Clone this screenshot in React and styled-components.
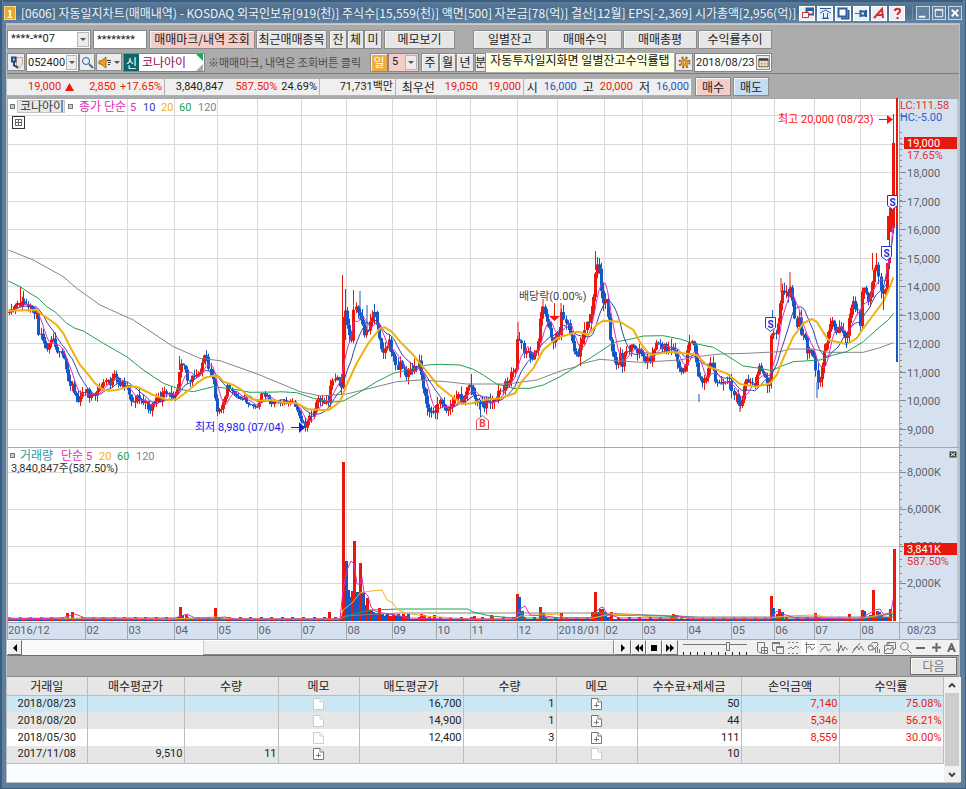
import React from "react";
import styled, { createGlobalStyle, css } from "styled-components";

const RED = "#e8190c";
const BLUE = "#1458c8";

const numeric = css`
  font-family: Roboto, "Noto Sans CJK KR", sans-serif;
  font-size: 11px;
`;

const GlobalStyle = createGlobalStyle`
  *, *::before, *::after { box-sizing: border-box; }
  body { margin: 0; background: #5c7d9c; }
  body, button, input, select, table {
    font-family: "Noto Sans CJK KR", sans-serif;
    font-size: 12px;
    line-height: 14px;
    color: #222;
  }
`;

/* ---------- window ---------- */

const Window = styled.main`
  width: 100%;
  padding: 0 6px 6px 5px;
  background: #5f7f9e;
  border-left: 2px solid #3d5c7e;
  border-right: 1px solid #3d5c7e;
  border-bottom: 1px solid #3d5c7e;
`;

const TitleBar = styled.header`
  display: flex;
  align-items: center;
  height: 24px;
  margin: 0 -4px;
  border-top: 2px solid #3d5c7e;
  background: linear-gradient(#587b9b, #4b6b89 45%, #6586a5);
`;

const AppBadge = styled.span`
  display: flex;
  align-items: center;
  justify-content: center;
  width: 12px;
  height: 14px;
  margin: 0 5px 0 1px;
  background: #e9a52c;
  border: 1px solid #f7d78d;
  color: #fff;
  font-weight: bold;
  font-size: 11px;
`;

const Title = styled.h1`
  flex: 1;
  min-width: 0;
  margin: 0;
  overflow: hidden;
  white-space: nowrap;
  font-size: 12px;
  line-height: 18px;
  font-weight: normal;
  color: #eef4fa;
`;

const TitleButtons = styled.div`
  display: flex;
  gap: 2px;
  padding-right: ${(p) => (p.$last ? "1px" : "7px")};
  ${(p) => p.$last && css`border-left: 1px solid #6d8cab; padding-left: 3px;`}
`;

const TitleButton = styled.button`
  display: flex;
  align-items: center;
  justify-content: center;
  width: ${(p) => (p.$frame ? 14 : 16)}px;
  height: ${(p) => (p.$frame ? 14 : 15)}px;
  padding: 0;
  border: 1px solid ${(p) => (p.$frame ? "#c9d8e6" : "#fff")};
  background: ${(p) => (p.$frame ? "#5f81a3" : "#e9eff7")};
  svg { display: block; flex: none; }
`;

const Client = styled.div`
  background: #ababab;
  border-top: 1px solid #c9c9c9;
  box-shadow: 0 0 0 1px #b9bfc6;
`;

/* ---------- toolbars ---------- */

const Bar = styled.div`
  display: flex;
  align-items: center;
  height: ${(p) => p.$height}px;
  padding-top: ${(p) => p.$top || 0}px;
  ${(p) => p.$rule && css`border-bottom: 1px solid #7d7d7d;`}
`;

const Gap = styled.span`
  flex: none;
  width: ${(p) => p.$width}px;
`;

const tones = {
  plain: "#e6e6e6",
  pink: "#f4cdc8",
  blue: "#c5dcf2",
  amber: "#efab3c",
};

const ToolButton = styled.button`
  flex: none;
  display: flex;
  align-items: center;
  justify-content: center;
  width: ${(p) => p.$width}px;
  height: 19px;
  padding: 0;
  overflow: hidden;
  white-space: nowrap;
  border: 1px solid #8b8b8b;
  box-shadow: inset 1px 1px 0 #f7f7f7;
  background: ${(p) => tones[p.$tone || "plain"]};
  color: ${(p) => (p.$tone === "amber" ? "#fff" : "#222")};
`;

const Field = styled.span`
  flex: none;
  display: flex;
  align-items: center;
  width: ${(p) => p.$width}px;
  height: 19px;
  padding-right: 1px;
  border: 1px solid #858585;
  background: ${(p) => (p.$tone ? tones[p.$tone] : "#fff")};
`;

const control = css`
  ${numeric}
  flex: 1;
  min-width: 0;
  width: 100%;
  height: 17px;
  padding: 0 0 0 ${(p) => (p.$tight ? 1 : 3)}px;
  border: 0;
  background: transparent;
  appearance: none;
  outline: none;
`;
const Select = styled.select`${control}`;
const Input = styled.input`${control}`;

const Drop = styled.span`
  flex: none;
  display: flex;
  align-items: center;
  justify-content: center;
  width: ${(p) => p.$width || 12}px;
  height: 15px;
  border: 1px solid #b5b5b5;
  background: #ececec;
`;

const StockTag = styled.span`
  align-self: stretch;
  width: 15px;
  background: #0c6866;
  color: #fff;
  text-align: center;
  line-height: 17px;
`;

const StockName = styled.span`
  flex: 1;
  padding-left: 3px;
  color: #8a0f55;
`;

const Hint = styled.span`
  flex: none;
  width: 160px;
  font-size: 11px;
  color: #4b4b4b;
  white-space: nowrap;
`;

const Balloon = styled.span`
  flex: none;
  width: 188px;
  height: 19px;
  background: #ffffdf;
  color: #111;
  white-space: nowrap;
  overflow: hidden;
  text-align: center;
`;

const Cell = styled.span`
  flex: none;
  display: flex;
  align-items: center;
  justify-content: flex-end;
  gap: ${(p) => p.$gap || 8}px;
  width: ${(p) => p.$width}px;
  height: 18px;
  padding: 0 2px;
  background: #efefef;
  border: solid #b3b3b3;
  border-width: 1px 1px 1px 0;
  white-space: nowrap;
`;

const Value = styled.span`
  ${(p) => !p.$label && numeric}
  color: ${(p) => (p.$tone === "up" ? RED : p.$tone === "low" ? "#2455c4" : "#222")};
`;

/* ---------- chart ---------- */

const ChartSvg = styled.svg`
  display: block;
  width: 100%;
  height: auto;
  background: #fff;
  font-family: Roboto, "Noto Sans CJK KR", sans-serif;
  font-size: 11px;
`;

const Korean = styled.text`
  font-family: "Noto Sans CJK KR", sans-serif;
  font-size: 12px;
`;

/* Each block lists points in thirds of a unit from its own corner. */
const block = (left, top, flat) => {
  const out = [];
  for (let i = 0; i < flat.length; i += 2) out.push([left + flat[i] / 3, top + flat[i + 1] / 3]);
  return out;
};

const joinBlocks = (a, b, c) => [...block(0, 240, a), ...block(280, 240, b), ...block(580, 220, c)];

const price = joinBlocks(
  [25,230,35,215,45,200,55,195,65,190,72,190,85,210,95,205,107,215,115,275,125,275,135,335,145,305,155,285,165,310,175,340,190,355,197,390,205,430,215,425,222,455,230,470,237,490,245,465,257,445,265,465,277,475,290,460,300,440,312,430,320,415,330,430,342,410,355,430,370,430,383,440,388,470,398,488,410,470,420,480,435,490,448,510,455,495,465,475,480,480,488,460,500,465,515,465,525,455,533,440,540,355,550,370,560,400,565,440,575,415,585,410,597,400,605,370,615,350,622,365,627,410,635,400,640,420,647,505,658,505,668,490,677,470,682,440,690,445,700,465,715,470,730,475,745,490,765,503,775,490,783,465,800,465,815,490,830,480,836,484],
  [0,485,40,490,50,515,60,535,78,562,88,530,100,525,110,480,125,490,145,480,152,425,165,405,180,440,184,440,188,235,197,210,207,290,215,305,222,180,230,220,240,240,250,280,262,270,270,245,283,215,292,260,300,310,310,340,325,305,335,330,347,385,360,365,375,405,390,395,405,390,415,360,425,410,432,470,445,515,460,520,470,495,485,485,500,510,515,495,530,470,545,475,560,450,573,435,585,480,600,495,608,500,620,480,635,490,650,475,665,445,680,430,690,410,700,400,707,390,712,290,722,295,730,330,745,345,765,350,775,300,783,205,790,200,800,240,815,310,822,310,828,270,838,280,845,215,860,245,875,300,887,340,895,345],
  [0,385,10,330,18,300,28,320,38,230,47,150,55,125,62,210,70,250,78,235,88,340,95,400,105,430,113,445,122,400,128,440,137,390,150,375,165,400,172,390,185,400,195,425,210,415,222,400,230,360,245,375,260,390,275,390,290,425,300,450,308,470,318,415,332,365,345,400,355,480,362,490,372,480,385,440,392,430,402,480,415,495,430,490,447,490,455,530,465,520,480,565,490,510,497,480,510,490,522,510,530,450,540,440,550,475,568,490,571,485,574,335,580,340,590,330,597,260,605,200,615,215,625,230,632,200,640,250,648,340,655,290,665,350,672,350,682,395,695,400,705,430,710,500,718,470,725,445,735,380,742,330,755,300,765,330,780,325,795,350,803,350,810,270,820,250,830,260,838,330,845,200,855,205,862,245,872,220,880,140,890,140,898,200,907,230,915,190,920,140,925,90,930,50,935,0]
);

const average20 = joinBlocks(
  [25,212,110,210,120,220,150,240,170,255,190,280,210,320,240,375,260,398,285,430,305,447,325,452,350,450,385,440,410,440,430,450,460,465,480,472,500,480,530,478,560,455,590,430,615,413,640,407,655,408,670,425,700,435,725,450,750,475,780,482,810,480,835,484],
  [0,487,50,490,85,508,140,511,150,508,180,485,200,435,230,370,265,310,300,265,315,262,335,275,360,305,400,345,420,370,445,400,475,437,510,465,545,492,575,490,610,480,660,475,705,460,725,425,760,385,790,330,830,295,890,275],
  [0,337,25,345,50,315,70,302,120,305,160,330,185,375,210,405,270,395,330,402,350,405,385,440,440,460,480,492,530,500,570,490,590,465,610,415,640,350,670,310,695,297,710,305,745,360,800,373,830,355,850,325,880,285,910,245,930,200,940,172]
);
const average60 = joinBlocks(
  [25,123,60,140,90,160,115,175,140,200,165,215,200,250,225,265,250,273,310,310,380,350,430,390,490,430,540,448,580,455,640,440,700,447,750,457,835,456],
  [0,455,50,458,100,475,150,487,190,483,230,462,290,425,340,400,390,388,440,375,480,373,540,375,580,388,610,405,650,432,700,445,750,445,790,435,840,410,880,385],
  [0,432,30,415,90,375,110,365,140,360,190,348,250,347,300,357,340,370,400,382,430,400,490,438,540,445,575,452,600,440,640,425,720,420,760,405,800,395,850,365,900,320,925,300,940,280]
);
const average120 = joinBlocks(
  [25,30,100,60,190,110,230,145,300,195,400,240,520,320,600,355,660,362,780,405,835,428],
  [0,430,60,455,120,468,200,462,270,445,350,425,420,420,500,425,560,432,680,432,770,420,850,390,890,380],
  [0,432,60,418,110,422,180,427,300,420,350,410,420,402,500,400,600,395,630,387,700,387,740,397,850,397,900,383,940,368]
);

const path = (pts) => "M" + pts.map(([x, y]) => `${x.toFixed(1)} ${y.toFixed(1)}`).join("L");

const valueAt = (pts, x) => {
  let i = 1;
  while (i < pts.length - 1 && pts[i][0] < x) i += 1;
  const [x0, y0] = pts[i - 1];
  const [x1, y1] = pts[i];
  const t = Math.max(0, Math.min(1, (x - x0) / (x1 - x0 || 1)));
  return y0 + (y1 - y0) * t;
};

let seed = 11;
const random = () => {
  seed = (seed * 16807) % 2147483647;
  return seed / 2147483647;
};

const candles = (() => {
  const out = [];
  let last = 313;
  for (let x = 9; x < 891; x += 2.1) {
    const calm = x > 225 && x < 300 ? 4 : x > 340 ? 9 : 7;
    const close = valueAt(price, x) + (random() - 0.5) * calm;
    const top = Math.min(last, close) - random() * calm * 0.9;
    const bottom = Math.max(last, close) + random() * calm * 0.9;
    out.push({ x, open: last, close, top, bottom });
    last = close;
  }
  return out;
})();

const tallWicks = [
  [20.5, 287, 306, 1], [23.5, 291, 306, 0], [342.5, 275, 356, 1], [345.5, 289, 340, 0],
  [360, 291, 320, 0], [353.5, 290, 305, 1], [367, 305, 330, 0], [374.5, 304, 320, 0],
  [471.5, 374, 395, 0], [518, 322, 345, 1], [543, 299, 312, 1], [561, 303, 318, 1],
  [580.5, 350, 366, 1], [595.5, 251, 270, 1], [597.5, 257, 275, 0], [772.5, 310, 325, 0],
  [790, 272, 290, 1], [781, 278, 292, 1], [817, 382, 398, 0], [872.5, 253, 270, 1],
  [876.5, 253, 270, 1], [883.5, 295, 310, 1], [846.5, 342, 348, 0], [480.5, 400, 418, 0],
  [699, 394, 402, 0], [740, 404, 412, 1], [205.5, 355, 365, 1], [179.5, 356, 370, 1],
];

const averageOf = (n) =>
  candles.map((c, i) => {
    const part = candles.slice(Math.max(0, i - n + 1), i + 1);
    return [c.x, part.reduce((s, p) => s + p.close, 0) / part.length];
  });

const months = [
  [7, "2016/12"], [85.5, "02"], [127.5, "03"], [174.5, "04"], [217.5, "05"], [257.5, "06"],
  [301.5, "07"], [346.5, "08"], [392.5, "09"], [436.5, "10"], [470.5, "11"], [517.5, "12"],
  [557.5, "2018/01"], [604.5, "02"], [642.5, "03"], [687.5, "04"], [731.5, "05"],
  [774.5, "06"], [814.5, "07"], [860.5, "08"],
];

const priceLines = [115.5, 144.5, 172.5, 201.5, 229.5, 258.5, 286.5, 315.5, 343.5, 372.5, 400.5, 429.5];
const volumeLines = [472.5, 509.5, 546.5, 583.5];

const volumeSpikes = [
  [67, 613, 1], [72, 612, 1], [180, 607, 1], [182, 615, 0], [186, 615, 1], [215, 608, 1], [329, 612, 1],
  [342.5, 462, 1], [345.5, 561, 0], [348, 590, 0], [350, 597, 0], [352, 591, 1], [357, 592, 0],
  [353.8, 541, 1], [359.8, 563, 1], [362.5, 592, 0], [364, 605, 0], [366.5, 598, 1], [355, 602, 0],
  [369, 610, 0], [371, 610, 1], [373, 612, 0], [376, 613, 0], [379, 608, 1], [382, 614, 0],
  [386, 615, 0], [393, 614, 1], [397, 615, 0], [403, 614, 1], [421, 614, 1], [424, 615, 1], [434, 615, 1],
  [474, 616, 1], [491, 615, 1], [516.5, 594, 1], [519, 597, 0], [521.5, 611, 0], [540, 607, 1], [542.5, 613, 0],
  [561, 613, 1], [592, 612, 1], [595, 592, 1], [598, 612, 0], [600, 609, 1], [602, 609, 1],
  [604.5, 612, 0], [611, 612, 1], [673, 614, 1], [676, 615, 0], [771, 596, 1], [773, 608, 0],
  [777, 614, 1], [779, 609, 1], [781.5, 612, 0], [815, 613, 1], [849, 614, 1], [861.5, 610, 1],
  [864, 611, 0], [872.5, 590, 1], [876.5, 611, 1], [879, 612, 0], [889.5, 609, 1], [893.5, 549, 1],
];

const Marker = ({ x, y, letter, tone, up }) => (
  <g>
    <path
      d={up ? `M${x - 6} ${y + 6}V${y - 3}L${x} ${y - 8}L${x + 6} ${y - 3}V${y + 6}Z` : `M${x - 5} ${y - 7}H${x + 5}V${y + 3}L${x} ${y + 7}L${x - 5} ${y + 3}Z`}
      fill="#fff" stroke={tone}
    />
    <text x={x} y={y + 3} fill={tone} fontSize="10" fontWeight="bold" textAnchor="middle">{letter}</text>
  </g>
);

const Legend = ({ y, items }) =>
  items.map(([x, text, fill]) =>
    /\d/.test(text) ? <text key={x} x={x} y={y} fill={fill}>{text}</text> : <Korean key={x} x={x} y={y} fill={fill}>{text}</Korean>
  );

const SmallSquare = ({ x, y }) => <rect x={x} y={y} width="4" height="4" fill="#ccc" stroke="#777" />;

function Chart() {
  const ticks = [];
  for (let y = 132; y < 446; y += 5.7) ticks.push(y);
  for (let y = 455; y < 620; y += 7.4) ticks.push(y);
  return (
    <ChartSvg viewBox="7 98 952 542" role="img" aria-label="코나아이 일봉 차트">
      <rect x="900" y="98" width="59" height="542" fill="#d6e1ef" />
      <rect x="7" y="622" width="952" height="18" fill="#d6e1ef" />
      <g stroke="#d9d9d9">
        {months.slice(1).map(([x]) => <line key={x} x1={x} x2={x} y1="98" y2="622" />)}
        {[...priceLines, ...volumeLines].map((y) => <line key={y} x1="7" x2="899" y1={y} y2={y} />)}
      </g>
      <path d="M7 98.5H959M7 447.5H959M7 622.5H959M7 639.5H959M899.5 98V640M7.5 98V640M958 98V640" stroke="#a5a8ad" fill="none" />
      {months.slice(1).map(([x]) => <line key={x} x1={x} x2={x} y1="622" y2="640" stroke="#a0a6ae" />)}
      <g stroke="#888">
        {ticks.map((y) => <line key={y} x1="900" x2="902" y1={Math.round(y) + 0.5} y2={Math.round(y) + 0.5} />)}
        {[...priceLines, ...volumeLines].map((y) => <line key={y} x1="900" x2="906" y1={y} y2={y} />)}
      </g>

      {candles.map((c) => {
        const tone = c.close < c.open ? RED : BLUE;
        return (
          <g key={c.x} fill={tone}>
            <rect x={Math.round(c.x)} y={c.top} width="1" height={c.bottom - c.top} />
            <rect x={Math.round(c.x) - 1} y={Math.min(c.open, c.close)} width="3" height={Math.max(1, Math.abs(c.close - c.open))} />
          </g>
        );
      })}
      <g fill="none">
        <path d={path(average120)} stroke="#858585" />
        <path d={path(average60)} stroke="#22a04c" />
        <path d={path(averageOf(12))} stroke="#3242b0" />
        <path d={path(averageOf(6))} stroke="#e12dbb" />
        <path d={path(average20)} stroke="#f0b010" strokeWidth="2" />
      </g>
      {tallWicks.map(([x, a, b, up]) => <line key={x} x1={x} x2={x} y1={a} y2={b} stroke={up ? RED : BLUE} />)}
      <rect x="342" y="317" width="3" height="38" fill={RED} />
      <path d="M888.5 216V240M890.5 208V232" stroke={RED} strokeWidth="3" />
      <path d="M893.5 114V234" stroke={RED} />
      <rect x="892" y="143" width="3" height="85" fill={RED} />
      <path d="M884 285L890 258L893 235" stroke="#3242b0" fill="none" />
      <path d="M886 275L891 250L893 225" stroke="#e12dbb" fill="none" />
      <rect x="896" y="98" width="2" height="128" fill={RED} />
      <rect x="896" y="226" width="2" height="136" fill={BLUE} />

      <g>
        {candles.map((c, i) => {
          const h = 2 + ((i * 7) % 5 === 0 ? 2 : 0) + (c.x > 340 && c.x < 410 ? 3 : 0) + (c.x > 860 ? 2 : 0);
          return <rect key={c.x} x={Math.round(c.x) - 1} y={621 - h} width="3" height={h} fill={(i * 5) % 7 < 3 ? RED : BLUE} />;
        })}
        {volumeSpikes.map(([x, y, up]) => <rect key={x} x={Math.round(x) - 1} y={y} width="3" height={621 - y} fill={up ? RED : BLUE} />)}
      </g>
      <g fill="none">
        <path d="M8 619H340L345 616L360 615L400 613H520L600 613L700 617H770L860 617H893" stroke="#858585" />
        <path d="M8 619H340L353 614L370 610L400 609H468L473 612L490 616L515 618H590L610 615L663 616L700 618H860L893 614" stroke="#22a04c" />
        <path d="M8 618H100L170 619L215 617L235 619H340L343 610L352 603L360 593L371 591L382 590L387 600L393 603L397 609L405 613L425 616L470 619H515L520 616L557 614L565 618H593L610 614L635 615L660 618H770L785 616L815 615L830 618H865L893 612" stroke="#efb020" />
        <path d="M8 619L62 618L75 614L85 618H175L187 614L195 618H213L225 617L235 619H340L343 590L347 570L351 561L354 564L357 584L360 584L362 578L364 592L368 596L371 607L375 611L383 613L395 615L410 618L450 619H515L520 609L525 606L530 615L545 616L560 618H590L600 608L603 607L607 614L620 618H670L680 616L690 619H770L776 612L779 610L783 614L795 618L860 619L875 610L880 609L884 615L891 612L893 600" stroke="#e12dbb" />
      </g>

      <SmallSquare x={10.5} y={104.5} />
      <rect x="17.5" y="100.5" width="47" height="12" fill="#e9e9e9" stroke="#c4c4c4" />
      <SmallSquare x={68.5} y={104.5} />
      <Legend y={111} items={[[20, "코나아이", "#333"], [79, "종가", "#e12dbb"], [104, "단순", "#e12dbb"], [130, "5", "#e12dbb"], [143, "10", "#2d3fb0"], [161, "20", "#efb020"], [179, "60", "#22a04c"], [198, "120", "#858585"]]} />
      <g stroke="#333" fill="none">
        <rect x="12.5" y="116.5" width="12" height="12" fill="#fff" />
        <path d="M15 119.5H22M15 122.5H22M15 125.5H22M15.5 119V126M18.5 119V126M21.5 119V126" stroke="#666" />
      </g>
      <SmallSquare x={10.5} y={453.5} />
      <Legend y={460} items={[[20, "거래량", "#2f9999"], [61, "단순", "#e12dbb"], [86, "5", "#e12dbb"], [99, "20", "#efb020"], [117, "60", "#22a04c"], [136, "120", "#858585"]]} />
      <text x="11" y="472" fill="#333">3,840,847주(587.50%)</text>

      <text x="778" y="123" fill="#ff1010">최고 20,000 (08/23)</text>
      <path d="M879 119.5H892" stroke="#ff1010" />
      <path d="M887 115L893 119.5L887 124Z" fill="#ff1010" />
      <text x="195" y="431" fill="#1818f0">최저 8,980 (07/04)</text>
      <path d="M291 427.5H305" stroke="#1818f0" />
      <path d="M299 422L305 427.5L299 433Z" fill="#1818f0" />
      <text x="519" y="300" fill="#444">배당락(0.00%)</text>
      <path d="M554.5 303V318" stroke={RED} />
      <path d="M549 316H560L554.5 321Z" fill="#ff1010" />
      <Marker x={482.5} y={423.5} letter="B" tone="#f04040" up />
      <Marker x={770.5} y={324.5} letter="S" tone="#2d2de0" />
      <Marker x={886.5} y={253.5} letter="S" tone="#2d2de0" />
      <Marker x={892.5} y={202.5} letter="S" tone="#2d2de0" />

      <g fill="#5c616b">
        {["18,000", "17,000", "16,000", "15,000", "14,000", "13,000", "12,000", "11,000", "10,000", "9,000"].map((t, i) => (
          <text key={t} x="907" y={priceLines[i + 2] + 4}>{t}</text>
        ))}
        {["8,000K", "6,000K", "4,000K", "2,000K"].map((t, i) => (
          <text key={t} x="907" y={volumeLines[i] + 3}>{t}</text>
        ))}
        {months.map(([x, t]) => <text key={x} x={x + 1} y="634">{t}</text>)}
        <text x="907" y="634">08/23</text>
      </g>
      <text x="900" y="109" fill="#e03030">LC:111.58</text>
      <text x="900" y="121" fill="#2464c8">HC:-5.00</text>
      <rect x="904" y="137" width="53" height="12" fill={RED} />
      <text x="907" y="147" fill="#fff">19,000</text>
      <text x="907" y="159" fill="#e03030">17.65%</text>
      <rect x="904" y="543" width="53" height="12" fill={RED} />
      <text x="907" y="553" fill="#fff">3,841K</text>
      <text x="907" y="565" fill="#e03030">587.50%</text>
      <rect x="949.5" y="451.5" width="7" height="6" fill="#444" />
      <path d="M951 453L955 456M955 453L951 456" stroke="#fff" />
    </ChartSvg>
  );
}

/* ---------- scroll strip ---------- */

const Strip = styled.div`
  display: flex;
  align-items: center;
  height: 16px;
  background: #f0f0f0;
  border-bottom: 1px solid #6f6f6f;
`;

const StepButton = styled.button`
  flex: none;
  display: flex;
  align-items: center;
  justify-content: center;
  width: ${(p) => p.$width || 15}px;
  height: 15px;
  padding: 0;
  border: 1px solid;
  border-color: #fff #707070 #707070 #fff;
  background: #f0f0f0;
`;

const Track = styled.div`
  flex: 1;
  display: flex;
  height: 15px;
  background: #f9f9f9;
  padding-left: 19%;
`;

const Thumb = styled.div`
  flex: 1;
  background: #efefef;
  border: 1px solid;
  border-color: #fff #8a8a8a #8a8a8a #ccc;
`;

const ZoomScale = styled.label`
  flex: none;
  display: block;
  width: 64px;
  height: 15px;
  margin: 0 6px 0 5px;
  background: repeating-linear-gradient(90deg, #222 0 1px, transparent 1px 7px) left bottom / 100% 3px no-repeat;
`;

const Range = styled.input`
  display: block;
  width: 100%;
  height: 12px;
  margin: 0;
  appearance: none;
  background: linear-gradient(#777, #777) center 4px / 100% 1px no-repeat;
  &::-webkit-slider-thumb {
    appearance: none;
    width: 4px;
    height: 9px;
    background: #eee;
    border: 1px solid #777;
  }
`;

const IconButton = styled.button`
  flex: none;
  display: flex;
  align-items: center;
  justify-content: center;
  width: ${(p) => p.$width || 15}px;
  height: ${(p) => p.$height || 15}px;
  padding: 0;
  border: ${(p) => (p.$raised ? "1px solid #8b8b8b" : "0")};
  background: ${(p) => (p.$pressed ? "#fff" : p.$raised ? "#ececec" : "transparent")};
`;

const stripIcons = [
  ["새 창", "M2.5 1.5H9.5V7M7 11.5H4L2.5 10V1.5M6.5 6.5H12.5V12.5H6.5ZM9.5 7V12M7 9.5H12"],
  ["겹친 창", "M1.5 1.5H8.5V4M4 9.5H1.5V1.5M1.5 2.5H8.5M5.5 5.5H12.5V12.5H5.5ZM5.5 6.5H12.5"],
  ["지표 영역", "M1 1.5H3M5 1.5H7M9 1.5H11M1 12.5H3M5 12.5H7M9 12.5H11M1 8L4 6L6 8L9 5L12 7"],
  ["추세선", "M2 3.5H12M3.5 1V12M4 7.5L6.5 5L9 9L12 6", true],
  ["평균선", "M1 3.5H12M1 11L4 7L7 5L9 10L12 8"],
  ["신호", "M3.5 1V12M1 9L4 10L6 4L8 10L10 6L13 9"],
  ["각도선", "M1 12L9 2M2 9L6 5L8 9L10 5L13 10"],
  ["지우개", "M1 6L6 1.5H10L11 4L6 9H2ZM6 9V5H1M8.5 12V7M10.5 12V6M12.5 12V8"],
  ["차트 비교", "M4 4V1.5H12.5V8H10M1.5 4.5H10V12.5H1.5ZM2 10L5 7L7 9L9 6M4 4L7 2"],
  ["돋보기", "M5.5 1.5A3.8 3.8 0 1 1 5.4 1.5M8.5 8.5L12.5 12.5"],
];

const PanelHead = styled.div`
  display: flex;
  justify-content: flex-end;
  align-items: center;
  height: 21px;
  padding-right: 2px;
  border-bottom: 1px solid #8a8a8a;
`;

const NextButton = styled.button`
  width: 47px;
  height: 18px;
  padding: 0;
  border: 1px solid #6f6f6f;
  box-shadow: inset 1px 1px 0 #fff;
  background: #e8e8e8;
  color: #777;
`;

/* ---------- trades ---------- */

const TradeArea = styled.section`
  display: flex;
  min-height: 105px;
  background: #fbfcff;
`;

const TradeTable = styled.table`
  flex: 1;
  width: 100%;
  align-self: flex-start;
  table-layout: fixed;
  border-collapse: collapse;
  border-bottom: 1px solid #bdbdbd;
`;

const HeadCell = styled.th`
  height: 18px;
  padding: 0;
  font-weight: normal;
  background: #e6e6e6;
  border: solid #bdbdbd;
  border-width: 0 1px 1px 0;
`;

const Row = styled.tr`
  background: ${(p) => (p.$picked ? "#cbe7f3" : p.$even ? "#e6e6e6" : "#fff")};
`;

const DataCell = styled.td`
  ${numeric}
  height: 17px;
  padding: 0 1px;
  text-align: ${(p) => (p.$center ? "center" : "right")};
  color: ${(p) => (p.$gain ? RED : "#222")};
  border-right: 1px solid #bdbdbd;
  svg { display: inline-block; vertical-align: middle; }
`;

const VScroll = styled.div`
  flex: none;
  display: flex;
  flex-direction: column;
  align-items: center;
  width: 17px;
  background: #f0f0f0;
`;

const VThumb = styled.div`
  flex: none;
  width: 14px;
  height: 73px;
  background: #cdcdcd;
`;

const VButton = styled(IconButton)`
  flex: 1;
`;

const columns = [
  ["거래일", 80], ["매수평균가", 97], ["수량", 94], ["메모", 81], ["매도평균가", 104],
  ["수량", 93], ["메모", 81], ["수수료+제세금", 104], ["손익금액", 98], ["수익률", 104],
];

const trades = [
  ["2018/08/23", "", "", false, "16,700", "1", true, "50", "7,140", "75.08%"],
  ["2018/08/20", "", "", false, "14,900", "1", true, "44", "5,346", "56.21%"],
  ["2018/05/30", "", "", false, "12,400", "3", true, "111", "8,559", "30.00%"],
  ["2017/11/08", "9,510", "11", true, "", "", false, "10", "", ""],
];

const Memo = ({ filled }) => (
  <svg width="11" height="12" viewBox="0 0 11 12" fill="#fff" stroke={filled ? "#777" : "#ccc"}>
    <path d="M0.5 0.5H7L10.5 4V11.5H0.5Z" />
    <path d="M7 0.5V4H10.5" />
    {filled && <path d="M5.5 4.5V9.5M3 7.5H8" />}
  </svg>
);

const ArrowSvg = styled.svg`
  flex: none;
  display: block;
`;

const Arrow = ({ d = "M0 0H6L3 3Z", w = 6, h = 3, fill = "#555" }) => (
  <ArrowSvg width={w} height={h} viewBox={`0 0 ${w} ${h}`}><path d={d} fill={fill} /></ArrowSvg>
);

const Glyph = ({ children, size = 13 }) => (
  <svg width={size} height={size} viewBox="0 0 13 13" fill="none" stroke="#2f5d9b">{children}</svg>
);

export default function App() {
  return (
    <>
      <GlobalStyle />
      <Window>
        <TitleBar>
          <AppBadge>1</AppBadge>
          <Title>[0606] 자동일지차트(매매내역) - KOSDAQ 외국인보유[919(천)] 주식수[15,559(천)] 액면[500] 자본금[78(억)] 결산[12월] EPS[-2,369] 시가총액[2,956(억)]</Title>
          <TitleButtons>
            <TitleButton aria-label="화면 연결"><Glyph><path d="M5.5 1.5H12.5V7.5H5.5ZM5.5 3H12.5" strokeWidth="2" /><path d="M1.5 5.5H7.5V10.5H1.5Z" fill="#fff" stroke="#d03030" /></Glyph></TitleButton>
            <TitleButton aria-label="맨 위로"><Glyph><path d="M1 1.5H12M1 6L6.5 3L12 6M4.5 6V11H8.5V6M3 11.5H10" /></Glyph></TitleButton>
            <TitleButton aria-label="화면 복사"><Glyph><path d="M1.5 1.5H9.5V9.5H1.5Z" fill="#fff" strokeWidth="2" /><path d="M11.5 3V11.5H4" strokeWidth="2" /></Glyph></TitleButton>
            <TitleButton aria-label="고정"><Glyph><path d="M0 6.5H5" stroke="#d04030" /><path d="M5.5 3V10M6 4.5H10V8.5H6M11 3V10" strokeWidth="2" /></Glyph></TitleButton>
            <TitleButton aria-label="글꼴"><Glyph><path d="M1 11L9 2L10 11M4 8H10" stroke="#d03030" strokeWidth="2" /></Glyph></TitleButton>
            <TitleButton aria-label="도움말"><Glyph><path d="M4 4C4 1 9 1 9 4C9 6 6.5 6 6.5 8M6.5 10V12" stroke="#e02020" strokeWidth="2" /></Glyph></TitleButton>
          </TitleButtons>
          <TitleButtons $last>
            <TitleButton $frame aria-label="최소화"><Glyph size={12}><path d="M2 10.5H9" stroke="#fff" strokeWidth="2" /></Glyph></TitleButton>
            <TitleButton $frame aria-label="최대화"><Glyph size={12}><path d="M2.5 2.5H10.5V10.5H2.5ZM2 3.5H11" stroke="#fff" /></Glyph></TitleButton>
            <TitleButton $frame aria-label="닫기"><Glyph size={12}><path d="M3 3L10 10M10 3L3 10" stroke="#fff" strokeWidth="2" /></Glyph></TitleButton>
          </TitleButtons>
        </TitleBar>

        <Client>
          <Bar $height={26} $top={2}>
            <Field $width={84}>
              <Select aria-label="계좌"><option>****-**07</option></Select>
              <Drop><Arrow /></Drop>
            </Field>
            <Gap $width={2} />
            <Field $width={54}><Input aria-label="비밀번호" defaultValue="********" /></Field>
            <Gap $width={2} />
            <ToolButton $width={106} $tone="pink">매매마크/내역 조회</ToolButton>
            <Gap $width={1} />
            <ToolButton $width={71}>최근매매종목</ToolButton>
            <Gap $width={2} />
            <ToolButton $width={18}>잔</ToolButton>
            <ToolButton $width={17}>체</ToolButton>
            <ToolButton $width={18}>미</ToolButton>
            <Gap $width={2} />
            <ToolButton $width={71}>메모보기</ToolButton>
            <Gap $width={18} />
            <ToolButton $width={74}>일별잔고</ToolButton>
            <Gap $width={1} />
            <ToolButton $width={74}>매매수익</ToolButton>
            <Gap $width={1} />
            <ToolButton $width={74}>매매총평</ToolButton>
            <Gap $width={1} />
            <ToolButton $width={74}>수익률추이</ToolButton>
          </Bar>
          <Bar $height={23} $rule>
            <IconButton $raised $width={18} $height={18} aria-label="종목 메모">
              <Glyph><path d="M6.5 1.5H12.5V8L9 12H6.5Z" fill="#f4e6c8" stroke="#aaa" /><path d="M2 1.5H5.5V5.5H2ZM4 5V9.5L8 11.5" stroke="#244a80" strokeWidth="2" /></Glyph>
            </IconButton>
            <Gap $width={1} />
            <Field $width={53}>
              <Input $tight aria-label="종목코드" defaultValue="052400" />
              <Drop $width={11}><Arrow /></Drop>
            </Field>
            <IconButton $raised $width={16} $height={18} aria-label="종목 검색">
              <Glyph><circle cx="5" cy="5" r="3.5" fill="#dff0fb" /><path d="M8 8L12 12" stroke="#4c6a90" strokeWidth="2" /></Glyph>
            </IconButton>
            <Gap $width={1} />
            <IconButton $raised $width={26} $height={18} aria-label="알림">
              <Glyph><path d="M1 5H3L8 1V12L3 8H1Z" fill="#f0a020" stroke="#a96a10" /><path d="M9 4.5H13M10 6.5H13M10 8.5H12" stroke="#333" /></Glyph>
              <Arrow w={9} d="M3 0H9L6 3Z" />
            </IconButton>
            <Gap $width={1} />
            <Field $width={82}>
              <StockTag>신</StockTag>
              <StockName>코나아이</StockName>
              <svg width="8" height="17" viewBox="0 0 8 17"><path d="M1 0H8V7Z" fill="#16a758" /><path d="M8 10V17H1Z" fill="#aaa" /></svg>
            </Field>
            <Gap $width={3} />
            <Hint>※매매마크, 내역은 조회버튼 클릭</Hint>
            <Gap $width={2} />
            <ToolButton $width={18} $tone="amber">일</ToolButton>
            <Field $width={31} $tone="pink">
              <Select aria-label="주기" defaultValue="5"><option>5</option></Select>
              <Drop><Arrow /></Drop>
            </Field>
            <Gap $width={2} />
            <ToolButton $width={18}>주</ToolButton>
            <ToolButton $width={17}>월</ToolButton>
            <ToolButton $width={18}>년</ToolButton>
            <Gap $width={1} />
            <ToolButton $width={11}>분</ToolButton>
            <Balloon role="tooltip">자동투자일지화면 일별잔고수익률탭</Balloon>
            <Gap $width={1} />
            <IconButton $raised $width={18} $height={18} aria-label="설정">
              <Glyph><circle cx="6.5" cy="6.5" r="5" stroke="#9a6418" strokeWidth="2" strokeDasharray="2 2" /><circle cx="6.5" cy="6.5" r="3.5" fill="#f7b63c" stroke="#c57a18" /><circle cx="6.5" cy="6.5" r="1.5" fill="#fff" stroke="#9a4d10" /></Glyph>
            </IconButton>
            <Gap $width={1} />
            <Field $width={78}>
              <Input $tight aria-label="조회일" defaultValue="2018/08/23" />
              <IconButton $raised $width={14} $height={15} aria-label="달력">
                <Glyph size={11}><path d="M1 2.5H12V11.5H1Z" fill="#f8e8c8" stroke="#444" /><path d="M1 3H12" stroke="#444" strokeWidth="3" /><path d="M4.5 5V11M8.5 5V11M2 8H11" stroke="#d7a860" /></Glyph>
              </IconButton>
            </Field>
          </Bar>
          <Bar $height={24} $top={1}>
            <Cell $width={158} $gap={4}><Value $tone="up">19,000</Value><Arrow w={9} h={8} d="M4.5 0L9 8H0Z" fill={RED} /><Gap $width={7} /><Value $tone="up">2,850</Value><Value $tone="up">+17.65%</Value></Cell>
            <Cell $width={155} $gap={4}><Value>3,840,847</Value><Gap $width={4} /><Value $tone="up">587.50%</Value><Value>24.69%</Value></Cell>
            <Cell $width={76}><Value>71,731백만</Value></Cell>
            <Cell $width={128} $gap={10}><Value $label>최우선</Value><Value $tone="up">19,050</Value><Value $tone="up">19,000</Value></Cell>
            <Cell $width={168} $gap={6}>
              <Value $label>시</Value><Value $tone="low">16,000</Value><Value $label>고</Value><Value $tone="up">20,000</Value><Value $label>저</Value><Value $tone="low">16,000</Value>
            </Cell>
            <Gap $width={3} />
            <ToolButton $width={36} $tone="pink">매수</ToolButton>
            <Gap $width={2} />
            <ToolButton $width={36} $tone="blue">매도</ToolButton>
          </Bar>

          <Chart />

          <Strip>
            <StepButton aria-label="왼쪽으로"><Arrow w={4} h={8} d="M4 0V8L0 4Z" fill="#000" /></StepButton>
            <Track><Thumb /></Track>
            <StepButton $width={17} aria-label="오른쪽으로"><Arrow w={4} h={8} d="M0 0V8L4 4Z" fill="#000" /></StepButton>
            <StepButton aria-label="뒤로"><Arrow w={8} h={8} d="M4 0V8L0 4ZM8 0V8L4 4Z" fill="#000" /></StepButton>
            <StepButton $width={16} aria-label="정지"><Arrow w={6} h={6} d="M0 0H6V6H0Z" fill="#000" /></StepButton>
            <StepButton $width={16} aria-label="앞으로"><Arrow w={8} h={8} d="M0 0V8L4 4ZM4 0V8L8 4Z" fill="#000" /></StepButton>
            <ZoomScale><Range type="range" aria-label="확대 비율" defaultValue="72" /></ZoomScale>
            {stripIcons.map(([name, d, on]) => (
              <IconButton key={name} $width={16} aria-label={name} $pressed={on}>
                <svg width="13" height="13" viewBox="0 0 13 13"><path d={d} fill="none" stroke="#777" /></svg>
              </IconButton>
            ))}
            <IconButton aria-label="축소"><Arrow w={9} h={2} d="M0 0H9V2H0Z" fill="#666" /></IconButton>
            <IconButton $width={16} aria-label="확대"><Arrow w={9} h={9} d="M0 3.5H3.5V0H5.5V3.5H9V5.5H5.5V9H3.5V5.5H0Z" fill="#666" /></IconButton>
            <IconButton aria-label="자동 맞춤"><svg width="9" height="9" viewBox="0 0 9 9"><path d="M1 9L4.5 1L8 9M2.5 6H6.5" fill="none" stroke="#666" strokeWidth="2" /></svg></IconButton>
          </Strip>

          <PanelHead><NextButton>다음</NextButton></PanelHead>

          <TradeArea>
            <TradeTable>
              <colgroup>{columns.map(([, w], i) => <col key={i} width={w} />)}</colgroup>
              <thead><tr>{columns.map(([name], i) => <HeadCell key={i} scope="col">{name}</HeadCell>)}</tr></thead>
              <tbody>
                {trades.map((row, r) => (
                  <Row key={row[0]} $picked={r === 0} $even={r % 2 === 1}>
                    {row.map((v, c) => (
                      <DataCell key={c} $center={c === 0 || typeof v === "boolean"} $gain={c >= 8}>
                        {typeof v === "boolean" ? <Memo filled={v} /> : v}
                      </DataCell>
                    ))}
                  </Row>
                ))}
              </tbody>
            </TradeTable>
            <VScroll>
              <VButton aria-label="위로"><svg width="8" height="5" viewBox="0 0 8 5"><path d="M1 4L4 1L7 4" stroke="#444" strokeWidth="2" fill="none" /></svg></VButton>
              <VThumb />
              <VButton aria-label="아래로"><svg width="8" height="5" viewBox="0 0 8 5"><path d="M1 1L4 4L7 1" stroke="#444" strokeWidth="2" fill="none" /></svg></VButton>
            </VScroll>
          </TradeArea>
        </Client>
      </Window>
    </>
  );
}
